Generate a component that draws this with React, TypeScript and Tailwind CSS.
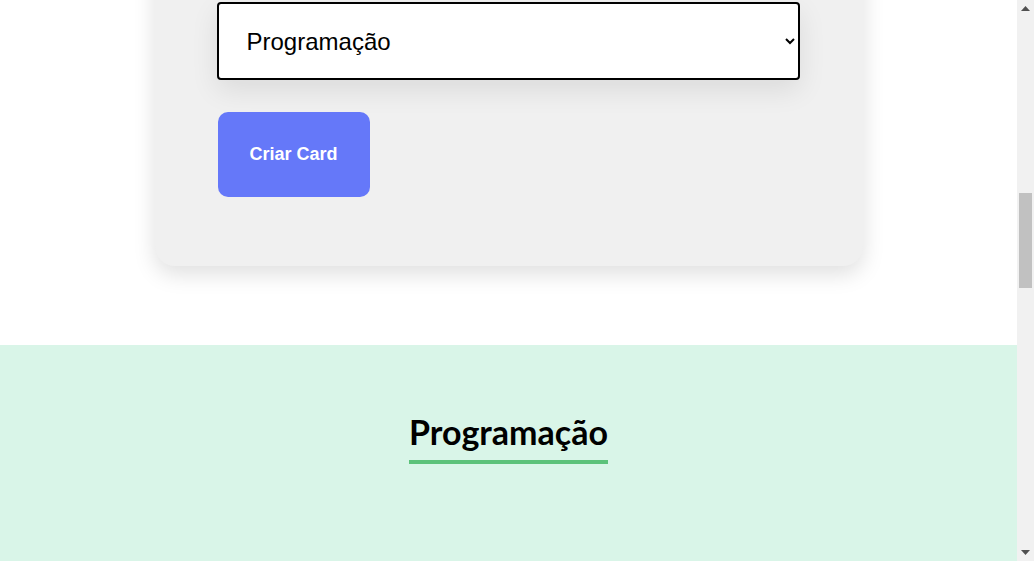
import { useEffect, useRef } from 'react';

const Scrollbar = () => (
  <div className="flex h-full w-[17px] shrink-0 flex-col bg-[#f1f1f1]">
    <div className="flex h-[17px] items-center justify-center">
      <svg width="9" height="5" viewBox="0 0 9 5">
        <path d="M0 5 L4.5 0 L9 5 Z" fill="#505050" />
      </svg>
    </div>
    <div className="flex-1 px-[2px]">
      <div className="mt-[176px] h-[95px] w-full bg-[#c1c1c1]" />
    </div>
    <div className="flex h-[17px] items-center justify-center">
      <svg width="9" height="5" viewBox="0 0 9 5">
        <path d="M0 0 L9 0 L4.5 5 Z" fill="#505050" />
      </svg>
    </div>
  </div>
);

const App = () => {
  const scrollRef = useRef<HTMLDivElement>(null);
  const selectRef = useRef<HTMLSelectElement>(null);

  // page is shown scrolled down so the category select sits at the top
  useEffect(() => {
    if (scrollRef.current && selectRef.current) {
      scrollRef.current.scrollTop = selectRef.current.offsetTop - 2;
    }
  }, []);

  return (
    <div className="flex h-[561px] w-full bg-white font-['Liberation_Sans',Arial,sans-serif]">
      <div ref={scrollRef} className="relative h-full flex-1 overflow-hidden">
        <div className="pt-[40px] pb-[79px]">
          <form
            className="mx-auto w-[708px] rounded-[20px] bg-[#f0f0f0] px-[62px] pt-[50px] pb-[69px] shadow-[0_8px_22px_rgba(0,0,0,0.13)]"
            onSubmit={(e) => e.preventDefault()}
          >
            <div className="mb-[40px] h-[78px] w-full rounded-[4px] border-2 border-black bg-white" />
            <div className="mb-[40px] h-[300px] w-full rounded-[4px] border-2 border-black bg-white" />
            <div className="mb-[40px] h-[78px] w-full rounded-[4px] border-2 border-black bg-white" />
            <div className="mb-[40px] h-[78px] w-full rounded-[4px] border-2 border-black bg-white" />
            <select
              ref={selectRef}
              defaultValue="Programação"
              className="block h-[78px] w-[583px] rounded-[4px] border-2 border-black bg-white pl-[24px] pr-[4px] text-[24px] text-black shadow-[0_10px_28px_rgba(0,0,0,0.09)]"
            >
              <option>Programação</option>
              <option>Design</option>
              <option>Matemática</option>
            </select>
            <button
              type="submit"
              className="ml-[1px] mt-[32px] flex h-[85px] w-[152px] items-center justify-center rounded-[10px] bg-[#6578f9] text-[18px] font-bold text-white"
            >
              Criar Card
            </button>
          </form>
        </div>

        <section className="bg-[#d9f5e8] pt-[67px] pb-[1500px] text-center">
          <h2 className="inline-block border-b-4 border-[#5cc27a] pb-[8px] font-['Lato',sans-serif] text-[34px] font-bold leading-[40px] text-black">
            Programação
          </h2>
        </section>
      </div>
      <Scrollbar />
    </div>
  );
};

export default App;
